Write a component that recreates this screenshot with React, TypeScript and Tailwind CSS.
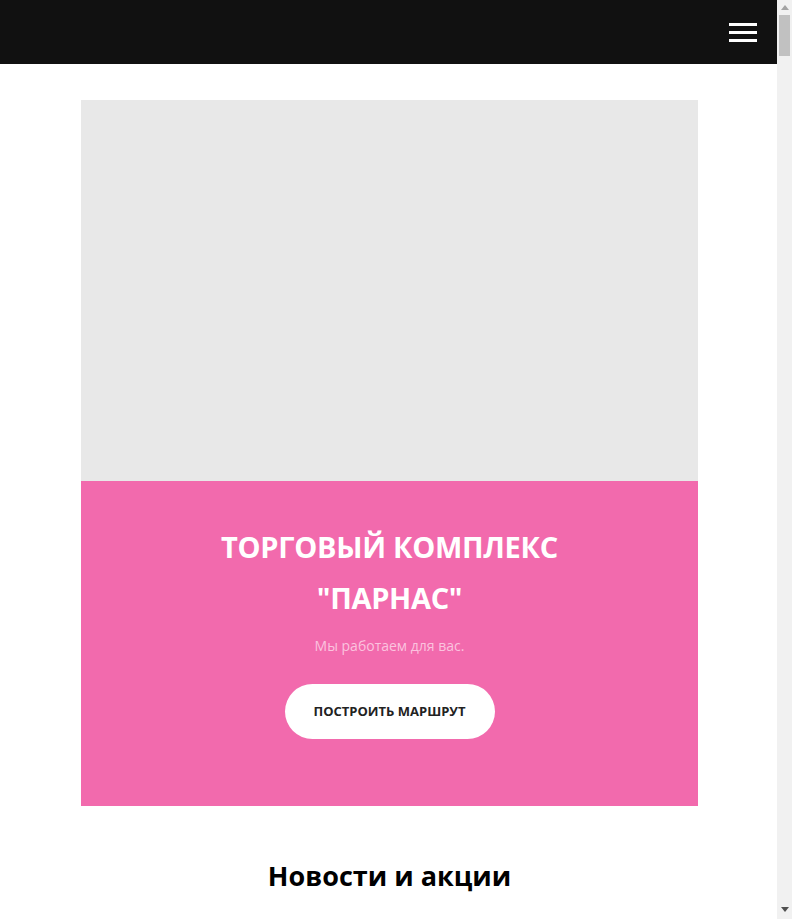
function FakeScrollbar() {
  return (
    <div className="fixed top-0 right-0 w-[15px] h-full bg-[#f1f1f1] flex flex-col items-center">
      <div className="h-[15px] flex items-center justify-center">
        <svg width="8" height="5" viewBox="0 0 8 5">
          <path d="M4 0 L8 5 L0 5 Z" fill="#a3a3a3" />
        </svg>
      </div>
      <div className="w-[11px] h-[41px] bg-[#c1c1c1]" />
      <div className="flex-1" />
      <div className="h-[15px] flex items-center justify-center mb-[2px]">
        <svg width="8" height="5" viewBox="0 0 8 5">
          <path d="M0 0 L8 0 L4 5 Z" fill="#505050" />
        </svg>
      </div>
    </div>
  );
}

export default function App() {
  return (
    <div className="min-h-[1400px] bg-white pr-[15px]" style={{ fontFamily: '"Open Sans", "Liberation Sans", sans-serif' }}>
      <header className="h-16 bg-[#111111] flex items-center justify-end pr-5">
        <button className="flex flex-col gap-[5px] w-7" aria-label="menu">
          <span className="block h-[3px] w-7 bg-white" />
          <span className="block h-[3px] w-7 bg-white" />
          <span className="block h-[3px] w-7 bg-white" />
        </button>
      </header>

      <main className="w-[617px] ml-[81px] pt-9">
        <div className="h-[381px] bg-[#e8e8e8]" />
        <section className="h-[325px] bg-[#f26aad] flex flex-col items-center pt-[40px]">
          <h1 className="text-[29px] leading-[51px] font-bold text-white text-center tracking-[-0.3px]">
            ТОРГОВЫЙ КОМПЛЕКС
            <br />
            "ПАРНАС"
          </h1>
          <p className="mt-[12px] text-[14px] text-[#fbc3df]">Мы работаем для вас.</p>
          <button className="mt-[28px] w-[210px] h-[55px] rounded-full bg-white text-[13px] font-bold text-[#222222]">
            ПОСТРОИТЬ МАРШРУТ
          </button>
        </section>

        <h2 className="mt-[50px] text-center text-[27px] font-bold text-black">Новости и акции</h2>
      </main>
      <FakeScrollbar />
    </div>
  );
}
